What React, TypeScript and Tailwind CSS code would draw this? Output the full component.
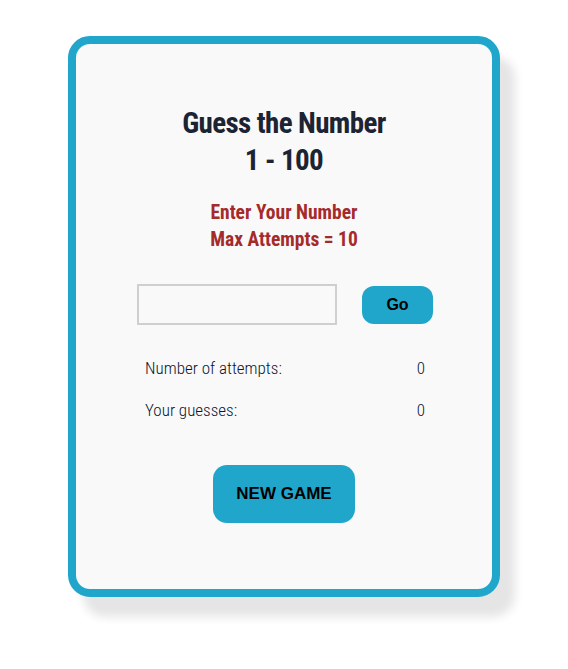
const condensed = { fontFamily: '"Roboto Condensed", "Liberation Sans Narrow", "DejaVu Sans Condensed", sans-serif' };

export default function App() {
  return (
    <div className="min-h-[669px] w-full bg-white pt-9 flex justify-center">
      <div className="w-[432px] h-[561px] rounded-[22px] border-8 border-[#20a6cb] bg-[#f9f9f9] shadow-[15px_20px_10px_#e5e5e5] flex flex-col items-center pt-[61px]">
        <h1 className="text-[29px] leading-[37px] font-bold tracking-[-0.6px] text-[#1c2333] text-center" style={condensed}>
          Guess the Number
          <br />
          1 - 100
        </h1>

        <p className="mt-[20px] text-[19.5px] leading-[27px] font-bold text-[#a52a2a] text-center" style={condensed}>
          Enter Your Number
          <br />
          Max Attempts = 10
        </p>

        <div className="mt-[31px] flex items-center gap-[25px] pl-[2px]">
          <input type="text" className="w-[200px] h-[41px] border-2 border-[#cfcfcf] bg-[#f9f9f9] outline-none px-2" />
          <button className="w-[71px] h-[38px] rounded-[12px] bg-[#20a6cb] text-[16px] font-bold text-black font-['Liberation_Sans',sans-serif]">
            Go
          </button>
        </div>

        <div className="mt-[30px] w-[282px] pl-[2px] flex flex-col gap-[15px] text-[17px] leading-[27px] font-light text-[#0a1530]" style={condensed}>
          <div className="flex justify-between">
            <span>Number of attempts:</span>
            <span>0</span>
          </div>
          <div className="flex justify-between">
            <span>Your guesses:</span>
            <span>0</span>
          </div>
        </div>

        <button className="mt-[41px] w-[142px] h-[58px] rounded-[14px] bg-[#20a6cb] text-[17px] font-bold text-black font-['Liberation_Sans',sans-serif]">
          NEW GAME
        </button>
      </div>
    </div>
  );
}
